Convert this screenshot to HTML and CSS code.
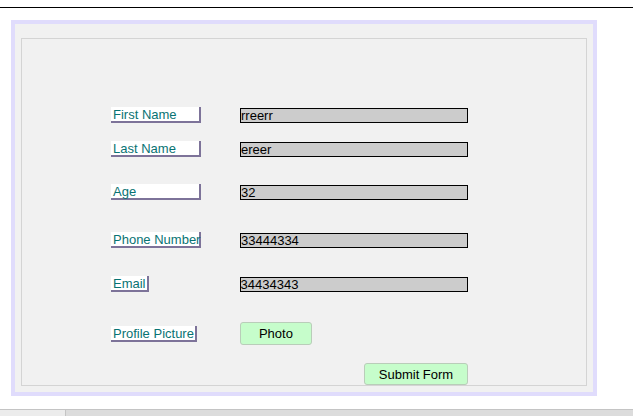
FILE: index.html
```html
<!DOCTYPE html>
<html>
<head>
<meta charset="utf-8">
<link rel="stylesheet" href="styles.css">
</head>
<body>
<div class="topline"></div>
<div class="panel">
  <div class="frame">
    <form class="form">
      <div class="row r1">
        <label class="lbl w90">First Name</label>
        <input class="field" type="text" value="rreerr">
      </div>
      <div class="row r2">
        <label class="lbl w90">Last Name</label>
        <input class="field" type="text" value="ereer">
      </div>
      <div class="row r3">
        <label class="lbl w90">Age</label>
        <input class="field" type="text" value="32">
      </div>
      <div class="row r4">
        <label class="lbl w90">Phone Number</label>
        <input class="field" type="text" value="33444334">
      </div>
      <div class="row r5">
        <label class="lbl">Email</label>
        <input class="field" type="text" value="34434343">
      </div>
      <div class="row r6">
        <label class="lbl">Profile Picture</label>
        <button type="button" class="btn photo">Photo</button>
      </div>
      <div class="row r7">
        <button type="button" class="btn submit">Submit Form</button>
      </div>
    </form>
  </div>
</div>
<div class="bottombar">
  <div class="tab"></div>
  <div class="rest"></div>
</div>
</body>
</html>
```
FILE: styles.css
```css
html, body {
  margin: 0;
  padding: 0;
  background: #ffffff;
  font-family: "Liberation Sans", Arial, sans-serif;
  font-size: 13px;
  overflow: hidden;
}
.topline {
  margin-top: 7px;
  height: 1px;
  background: #000;
}
.panel {
  margin: 12px 0 0 11px;
  width: 586px;
  height: 376px;
  box-sizing: border-box;
  border: 4px solid #e0dcfc;
  background: #f1f1f1;
  padding: 14px 6px 6px 6px;
}
.frame {
  box-sizing: border-box;
  height: 348px;
  border: 1px solid #d4d4d4;
}
.form {
  margin: 0;
  padding: 68px 0 0 89px;
  display: flex;
  flex-direction: column;
}
.row {
  display: flex;
  align-items: center;
  height: 16px;
}
.r2 { margin-top: 18px; }
.r3 { margin-top: 27px; }
.r4 { margin-top: 32px; }
.r5 { margin-top: 28px; }
.r6 { margin-top: 30px; height: 23px; }
.r7 { margin-top: 18px; height: 22px; padding-left: 253px; }
.lbl {
  box-sizing: border-box;
  height: 16px;
  line-height: 13px;
  padding: 1px 1px 0 2px;
  background: #ffffff;
  color: #087373;
  border-right: 2px solid #7d7399;
  border-bottom: 2px solid #7d7399;
  white-space: nowrap;
}
.w90 { width: 90px; }
.r1 .field, .r2 .field, .r3 .field, .r4 .field { margin-left: 39px; }
.r5 .field { margin-left: 91px; }
.r6 .photo { margin-left: 43px; }
.field {
  box-sizing: border-box;
  width: 228px;
  height: 15px;
  padding: 0;
  border: 1px solid #000;
  background: #cccccc;
  font-family: "Liberation Sans", Arial, sans-serif;
  font-size: 13px;
  line-height: 13px;
  color: #000;
  outline: none;
}
.btn {
  box-sizing: border-box;
  padding: 0;
  background: #c6fdcb;
  border: 1px solid #b9cdb9;
  border-radius: 3px;
  font-family: "Liberation Sans", Arial, sans-serif;
  font-size: 13px;
  color: #000;
}
.photo { width: 72px; height: 23px; }
.submit { width: 104px; height: 22px; }
.bottombar {
  margin-top: 13px;
  height: 7px;
  border-top: 1px solid #c4c4c4;
  display: flex;
}
.tab {
  width: 65px;
  background: #ececec;
  border-right: 1px solid #c4c4c4;
}
.rest {
  flex: 1;
  background: #dcdcdc;
}
```
